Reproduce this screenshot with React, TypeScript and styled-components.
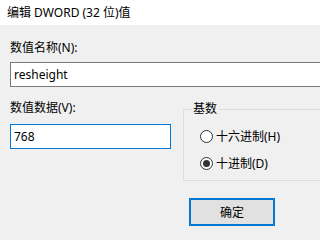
import { FunctionComponent } from 'react';
import styled, { createGlobalStyle } from 'styled-components';

const GlobalStyle = createGlobalStyle`
  html, body {
    margin: 0;
    padding: 0;
    background: #f0f0f0;
  }
  body {
    font-family: "Noto Sans", "Noto Sans CJK SC", sans-serif;
    font-size: 12px;
    color: #000;
  }
`;

const Dialog = styled.div`
  width: 100vw;
  height: 240px;
  overflow: hidden;
  background: #f0f0f0;
`;

const TitleBar = styled.div`
  height: 25px;
  background: #fff;
  display: flex;
  align-items: center;
  padding-left: 7px;
  padding-bottom: 1px;
  box-sizing: border-box;
  white-space: nowrap;
`;

const Body = styled.div`
  width: 420px;
  padding-left: 10px;
`;

const Label = styled.div<{ $top: number }>`
  margin-top: ${(p) => p.$top}px;
  line-height: 16px;
  white-space: nowrap;
`;

const TextBox = styled.div<{ $focused?: boolean; $width: number; $top: number }>`
  box-sizing: border-box;
  margin-top: ${(p) => p.$top}px;
  width: ${(p) => p.$width}px;
  height: 25px;
  display: flex;
  align-items: center;
  padding-left: 3px;
  background: #fff;
  border: 1px solid ${(p) => (p.$focused ? '#0078d7' : '#7a7a7a')};
`;

const Row = styled.div`
  display: flex;
  gap: 12px;
  margin-top: 13px;
`;

const LeftColumn = styled.div`
  width: 161px;
  display: flex;
  flex-direction: column;
`;

const RightColumn = styled.div`
  display: flex;
  flex-direction: column;
`;

const GroupBox = styled.fieldset`
  margin: 0;
  width: 140px;
  box-sizing: border-box;
  border: 1px solid #dcdcdc;
  padding: 0 0 8px 7px;
`;

const Legend = styled.legend`
  padding: 0 2px;
  line-height: 18px;
`;

const RadioRow = styled.div<{ $top: number }>`
  display: flex;
  align-items: center;
  gap: 3px;
  height: 18px;
  margin-top: ${(p) => p.$top}px;
  padding-left: 9px;
  white-space: nowrap;
`;

const RadioCircle = styled.span<{ $checked?: boolean }>`
  box-sizing: border-box;
  width: 13px;
  height: 13px;
  border-radius: 50%;
  border: 1px solid #333;
  background: #fff;
  display: flex;
  align-items: center;
  justify-content: center;

  &::after {
    content: '';
    width: 7px;
    height: 7px;
    border-radius: 50%;
    background: ${(p) => (p.$checked ? '#333' : 'transparent')};
  }
`;

const Button = styled.div`
  box-sizing: border-box;
  margin-top: 17px;
  margin-left: 6px;
  width: 86px;
  height: 28px;
  border: 2px solid #0078d7;
  background: #e1e1e1;
  display: flex;
  align-items: center;
  justify-content: center;
`;

const App: FunctionComponent = () => {
  return (
    <Dialog>
      <GlobalStyle />
      <TitleBar>编辑 DWORD (32 位)值</TitleBar>
      <Body>
        <Label $top={15}>数值名称(N):</Label>
        <TextBox $top={6} $width={400}>resheight</TextBox>
        <Row>
          <LeftColumn>
            <Label $top={0}>数值数据(V):</Label>
            <TextBox $top={8} $width={161} $focused>
              768
            </TextBox>
          </LeftColumn>
          <RightColumn>
            <GroupBox>
              <Legend>基数</Legend>
              <RadioRow $top={9}>
                <RadioCircle />
                十六进制(H)
              </RadioRow>
              <RadioRow $top={9}>
                <RadioCircle $checked />
                十进制(D)
              </RadioRow>
            </GroupBox>
            <Button>确定</Button>
          </RightColumn>
        </Row>
      </Body>
    </Dialog>
  );
};

export default App;
